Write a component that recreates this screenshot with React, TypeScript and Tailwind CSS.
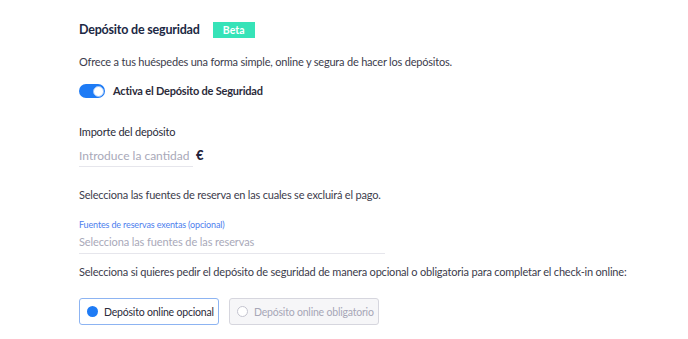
import React from "react";

function Toggle() {
  return (
    <span className="relative inline-flex h-[14px] w-[26px] shrink-0 items-center rounded-full bg-[#1e7bf5]">
      <span className="absolute right-[1.5px] h-[11px] w-[11px] rounded-full border border-[#9cc4fb] bg-white" />
    </span>
  );
}

function Radio({ label, active, w }: { label: string; active: boolean; w: string }) {
  return (
    <div
      className={`flex h-[27px] items-center gap-[6px] whitespace-nowrap rounded-[3px] border pl-[7px] text-[10.5px] ${w} ${
        active
          ? "border-[#8db4f2] bg-white text-[#2b2b3a]"
          : "border-[#d6d6de] bg-[#f6f6f8] text-[#a7a7b7]"
      }`}
    >
      <span
        className={`h-[11px] w-[11px] shrink-0 rounded-full ${
          active ? "bg-[#1e7bf5]" : "border border-[#c4c4cf] bg-white"
        }`}
      />
      <span>{label}</span>
    </div>
  );
}

export default function App() {
  return (
    <div
      className="h-[339px] w-[688px] overflow-hidden bg-white pl-[79px] pt-[22px] text-[11px] leading-[14px] tracking-[-0.2px] text-[#3c3c4c]"
      style={{ fontFamily: "Lato, 'Open Sans', sans-serif" }}
    >
      <div className="flex h-[16px] items-center gap-[13px]">
        <h2 className="text-[12.5px] font-bold text-[#202844]">Depósito de seguridad</h2>
        <span className="flex h-[16px] w-[42px] items-center justify-center bg-[#36e3b8] text-[10.5px] font-bold tracking-normal text-white">
          Beta
        </span>
      </div>

      <p className="mt-[17px]">
        Ofrece a tus huéspedes una forma simple, online y segura de hacer los depósitos.
      </p>

      <label className="mt-[15px] flex h-[14px] items-center gap-[8px]">
        <Toggle />
        <span className="font-bold text-[#2b2b3a]">Activa el Depósito de Seguridad</span>
      </label>

      <div className="mt-[27px] text-[#2b2b3a]">Importe del depósito</div>
      <div className="mt-[10px] flex items-start gap-[3px]">
        <div className="w-[114px] border-b border-[#e6e6ec] pb-[3px] text-[12px] tracking-normal text-[#a9a9b9]">
          Introduce la cantidad
        </div>
        <span className="-mt-[1px] text-[13px] font-black text-[#23233a]">€</span>
      </div>

      <p className="mt-[21px]">Selecciona las fuentes de reserva en las cuales se excluirá el pago.</p>

      <div className="mt-[17px] w-[306px]">
        <div className="text-[9px] leading-[12px] tracking-[-0.15px] text-[#4d80ee]">
          Fuentes de reservas exentas (opcional)
        </div>
        <div className="mt-[4px] border-b border-[#e6e6ec] pb-[4px] tracking-[-0.1px] text-[#a9a9b9]">
          Selecciona las fuentes de las reservas
        </div>
      </div>

      <p className="mt-[11px]">
        Selecciona si quieres pedir el depósito de seguridad de manera opcional o obligatoria para completar el
        check-in online:
      </p>

      <div className="mt-[19px] flex gap-[10px]">
        <Radio label="Depósito online opcional" active w="w-[140px]" />
        <Radio label="Depósito online obligatorio" active={false} w="w-[150px]" />
      </div>
    </div>
  );
}
